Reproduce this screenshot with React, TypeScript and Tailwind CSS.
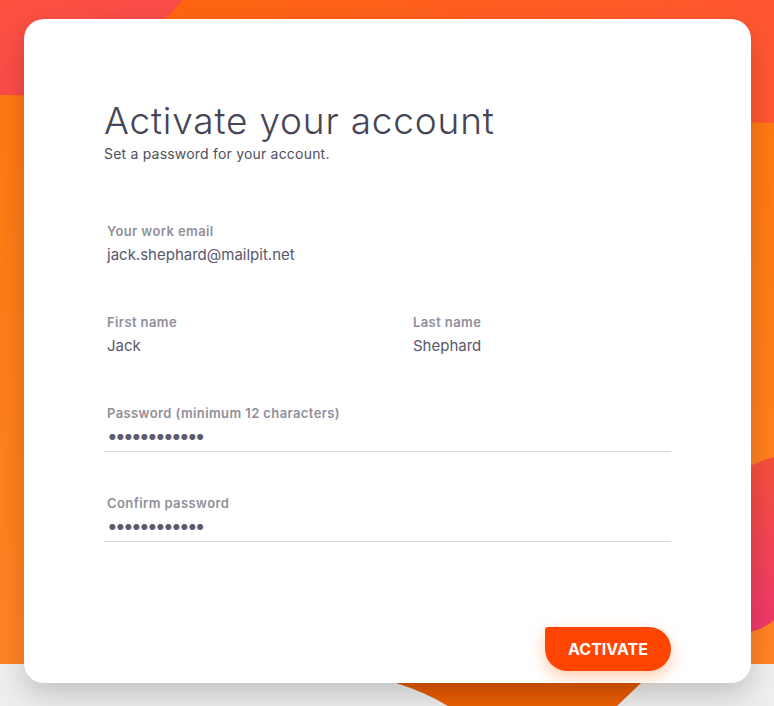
import React from 'react'

const font = { fontFamily: 'Inter, "Noto Sans", sans-serif' }

function Backdrop() {
  return (
    <svg className="absolute inset-0 h-full w-full" viewBox="0 0 774 706" preserveAspectRatio="none" aria-hidden>
      <defs>
        <linearGradient id="base" x1="0" y1="0" x2="0" y2="1">
          <stop offset="0" stopColor="#f6f6f6" />
          <stop offset="1" stopColor="#eeeeee" />
        </linearGradient>
        <linearGradient id="orange" x1="0" y1="0" x2="0" y2="1">
          <stop offset="0" stopColor="#ff770f" />
          <stop offset="1" stopColor="#ff8424" />
        </linearGradient>
        <linearGradient id="top" x1="0" y1="0" x2="1" y2="0">
          <stop offset="0" stopColor="#ff6a05" />
          <stop offset="1" stopColor="#ff5732" />
        </linearGradient>
        <linearGradient id="red" x1="0" y1="0" x2="1" y2="1">
          <stop offset="0" stopColor="#fd5240" />
          <stop offset="1" stopColor="#f74652" />
        </linearGradient>
        <linearGradient id="pink" x1="0" y1="0" x2="0" y2="1">
          <stop offset="0" stopColor="#f5503c" />
          <stop offset="1" stopColor="#ee386c" />
        </linearGradient>
        <linearGradient id="wedge" x1="0" y1="0" x2="0" y2="1">
          <stop offset="0" stopColor="#e05800" />
          <stop offset="1" stopColor="#ee6000" />
        </linearGradient>
      </defs>
      <rect x="0" y="0" width="774" height="706" fill="url(#base)" />
      <rect x="0" y="0" width="774" height="664" fill="url(#orange)" />
      <polygon points="0,0 774,0 774,123 0,95" fill="url(#top)" />
      <polygon points="0,0 183,0 93,95 0,95" fill="url(#red)" />
      <path d="M740,472 Q758,461 774,457 L774,620 Q762,631 740,634 Z" fill="url(#pink)" />
      <path d="M396,683 Q425,692 448,706 L617,706 L641,683 Z" fill="url(#wedge)" />
    </svg>
  )
}

function Field({ label, value, line, dots }: { label: string; value: string; line?: boolean; dots?: boolean }) {
  return (
    <div className={line ? 'border-b border-[#d9d9d9] pb-[3px]' : ''}>
      <p className="pl-[3px] text-[13px] leading-[18px] font-semibold tracking-[0.4px] text-[#8f8f9b]">{label}</p>
      <p
        className={
          dots
            ? 'mt-[4px] pl-[3px] text-[19px] leading-[22px] tracking-[-2.7px] text-[#5a5a6c]'
            : 'mt-[4px] pl-[3px] text-[15px] leading-[22px] text-[#58586b]'
        }
      >
        {value}
      </p>
    </div>
  )
}

export default function App() {
  return (
    <div className="relative h-[706px] w-[774px] overflow-hidden" style={font}>
      <Backdrop />
      <div className="relative pl-[24px] pr-[23px] pt-[19px]">
        <div className="h-[664px] rounded-[20px] bg-white px-[80px] pt-[82px] shadow-[0_12px_28px_rgba(0,0,0,0.18)]">
          <h1 className="text-[37px] leading-[40px] font-light tracking-[0.8px] text-[#454556]">
            Activate your account
          </h1>
          <p className="mt-[3px] text-[14px] leading-[20px] tracking-[0.2px] text-[#4f4f60]">
            Set a password for your account.
          </p>

          <div className="mt-[58px]">
            <Field label="Your work email" value="jack.shephard@mailpit.net" />
          </div>

          <div className="mt-[47px] grid grid-cols-[306px_1fr]">
            <Field label="First name" value="Jack" />
            <Field label="Last name" value="Shephard" />
          </div>

          <div className="mt-[47px]">
            <Field label="Password (minimum 12 characters)" value="••••••••••••" line dots />
          </div>

          <div className="mt-[42px]">
            <Field label="Confirm password" value="••••••••••••" line dots />
          </div>

          <div className="mt-[85px] flex justify-end">
            <button className="h-[44px] w-[126px] rounded-[22px] rounded-tl-[3px] bg-[#ff4500] text-[16px] font-bold text-white shadow-[0_6px_16px_rgba(255,110,20,0.35)]">
              ACTIVATE
            </button>
          </div>
        </div>
      </div>
    </div>
  )
}
